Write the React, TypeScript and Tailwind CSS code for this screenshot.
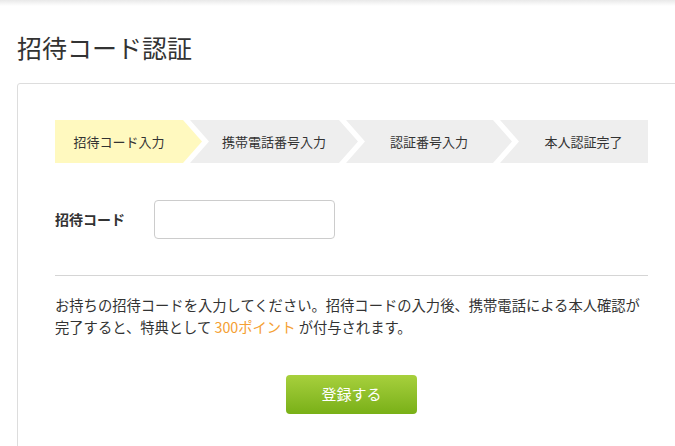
import React from "react";

export default function App() {
  return (
    <div className="min-h-screen bg-white overflow-hidden text-[#333] [font-family:'Noto_Sans_CJK_JP','Noto_Sans',sans-serif]">
      <div className="h-[6px] bg-gradient-to-b from-[#e9e9e9] to-white" />
      <h1 className="mt-[22px] pl-[17px] text-[25px] leading-[38px] font-normal">招待コード認証</h1>
      <div className="mt-[17px] ml-[17px] w-[669px] border border-[#dddddd] rounded-[3px] px-[37px] pt-[36px] pb-[40px]">
        <div className="flex h-[43px] text-[13px]">
          <div className="w-[147px] shrink-0 flex items-center justify-center pr-[19px] bg-[#fff9bf] [clip-path:polygon(0_0,128px_0,147px_50%,128px_100%,0_100%)]">
            招待コード入力
          </div>
          <div className="w-[168px] shrink-0 -ml-[12px] flex items-center justify-center bg-[#eeeeee] [clip-path:polygon(0_0,149px_0,168px_50%,149px_100%,0_100%,19px_50%)]">
            携帯電話番号入力
          </div>
          <div className="w-[166px] shrink-0 -ml-[12px] flex items-center justify-center bg-[#eeeeee] [clip-path:polygon(0_0,147px_0,166px_50%,147px_100%,0_100%,19px_50%)]">
            認証番号入力
          </div>
          <div className="w-[148px] shrink-0 -ml-[12px] flex items-center justify-center pl-[19px] bg-[#eeeeee] [clip-path:polygon(0_0,100%_0,100%_100%,0_100%,19px_50%)]">
            本人認証完了
          </div>
        </div>
        <div className="mt-[37px] flex items-center">
          <div className="w-[99px] text-[14px] font-bold">招待コード</div>
          <input
            type="text"
            className="w-[181px] h-[39px] border border-[#cccccc] rounded-[4px] outline-none px-2"
          />
        </div>
        <div className="mt-[36px] border-t border-[#d5d5d5]" />
        <p className="mt-[18px] text-[14.3px] leading-[22px]">
          お持ちの招待コードを入力してください。招待コードの入力後、携帯電話による本人確認が完了すると、特典として{" "}
          <span className="text-[#f5a033]">300ポイント</span> が付与されます。
        </p>
        <div className="mt-[37px] flex justify-center">
          <button className="w-[131px] h-[39px] rounded-[4px] bg-gradient-to-b from-[#a7d03c] to-[#79b016] text-white text-[15px]">
            登録する
          </button>
        </div>
      </div>
    </div>
  );
}
